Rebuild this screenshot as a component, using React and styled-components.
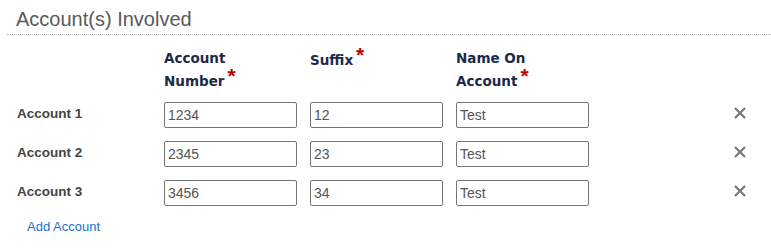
import React, { useState } from "react";
import styled, { createGlobalStyle } from "styled-components";

const GlobalStyle = createGlobalStyle`
  body {
    margin: 0;
    background: #fff;
    font-family: "Liberation Sans", Arial, sans-serif;
  }
`;

const Section = styled.section`
  width: 771px;
  padding-left: 7px;
  box-sizing: border-box;
`;

const Title = styled.h2`
  margin: 0;
  padding: 8px 0 4px 9px;
  font-size: 20px;
  font-weight: normal;
  line-height: 22px;
  color: #5a5a5a;
  border-bottom: 1px dotted #b5b5b5;
`;

const Grid = styled.div`
  display: grid;
  grid-template-columns: 135px 133px 133px 133px 1fr;
  column-gap: 13px;
  row-gap: 13px;
  padding: 12px 25px 0 9px;
  align-items: center;
`;

const HeadCell = styled.div`
  font-family: "DejaVu Sans", Verdana, sans-serif;
  font-size: 13.5px;
  font-weight: bold;
  line-height: 23px;
  color: #1c2a48;
  align-self: start;
  margin-bottom: -4px;
  padding-top: ${(p) => (p.$low ? "2px" : "0")};
`;

const Required = styled.span`
  font-family: "Liberation Sans", Arial, sans-serif;
  font-weight: bold;
  color: #c00000;
  font-size: 21px;
  line-height: 0;
  position: relative;
  top: -3px;
  margin-left: 3px;
`;

const RowLabel = styled.div`
  font-size: 13.5px;
  font-weight: bold;
  color: #444;
  padding-left: 1px;
  margin-top: -3px;
`;

const Field = styled.input`
  box-sizing: border-box;
  width: 133px;
  height: 26px;
  padding: 0 3px;
  border: 1px solid #767676;
  border-radius: 2px;
  font-family: "Liberation Sans", Arial, sans-serif;
  font-size: 14px;
  color: #555;
  outline: none;
`;

const RemoveButton = styled.button`
  justify-self: end;
  width: 12px;
  height: 12px;
  padding: 0;
  border: 0;
  background: none;
  cursor: pointer;
  margin-top: -4px;
  display: flex;
`;

const AddLink = styled.a`
  display: inline-block;
  margin: 13px 0 0 20px;
  font-size: 13px;
  color: #1a73c9;
  text-decoration: none;
  cursor: pointer;
`;

const CloseIcon = () => (
  <svg width="12" height="12" viewBox="0 0 12 12">
    <path d="M1 1 L11 11 M11 1 L1 11" stroke="#777" strokeWidth="2.2" fill="none" />
  </svg>
);

const initial = [
  { number: "1234", suffix: "12", name: "Test" },
  { number: "2345", suffix: "23", name: "Test" },
  { number: "3456", suffix: "34", name: "Test" },
];

export default function App() {
  const [accounts, setAccounts] = useState(initial);

  const update = (i, key, value) =>
    setAccounts((list) => list.map((a, j) => (j === i ? { ...a, [key]: value } : a)));

  return (
    <>
      <GlobalStyle />
      <Section>
        <Title>Account(s) Involved</Title>
        <Grid>
          <div />
          <HeadCell>
            Account Number<Required>*</Required>
          </HeadCell>
          <HeadCell $low>
            Suffix<Required>*</Required>
          </HeadCell>
          <HeadCell>
            Name On Account<Required>*</Required>
          </HeadCell>
          <div />
          {accounts.map((a, i) => (
            <React.Fragment key={i}>
              <RowLabel>Account {i + 1}</RowLabel>
              <Field value={a.number} onChange={(e) => update(i, "number", e.target.value)} />
              <Field value={a.suffix} onChange={(e) => update(i, "suffix", e.target.value)} />
              <Field value={a.name} onChange={(e) => update(i, "name", e.target.value)} />
              <RemoveButton
                aria-label="Remove account"
                onClick={() => setAccounts((list) => list.filter((_, j) => j !== i))}
              >
                <CloseIcon />
              </RemoveButton>
            </React.Fragment>
          ))}
        </Grid>
        <AddLink
          onClick={() => setAccounts((list) => [...list, { number: "", suffix: "", name: "" }])}
        >
          Add Account
        </AddLink>
      </Section>
    </>
  );
}
